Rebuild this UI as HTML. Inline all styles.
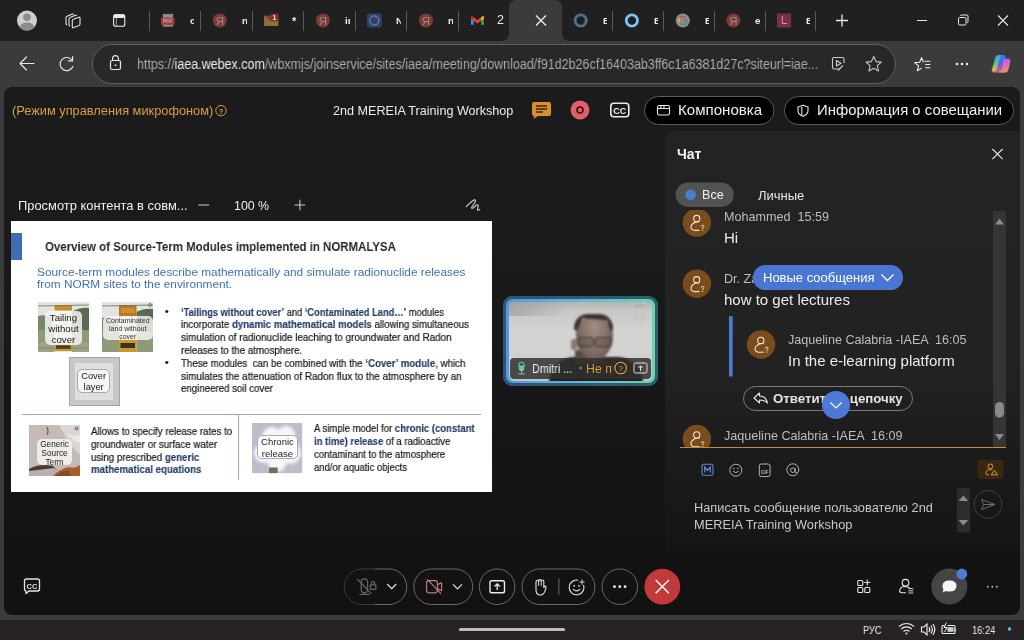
<!DOCTYPE html>
<html><head><meta charset="utf-8">
<style>
*{box-sizing:border-box;margin:0;padding:0}
html,body{width:1024px;height:640px;overflow:hidden;background:#3b3b3b;font-family:"Liberation Sans",sans-serif}
.a{position:absolute}
.t{position:absolute;white-space:pre;line-height:1;will-change:transform}
svg{position:absolute;overflow:visible;will-change:transform}
#tabbar{left:0;top:0;width:1024px;height:41px;background:#202020}
#addr{left:0;top:41px;width:1024px;height:46px;background:#3b3b3b}
#omni{left:92px;top:44px;width:804px;height:40px;border-radius:20px;background:#282828;border:1px solid #5e5e5e}
#webex{left:4px;top:87px;width:1016px;height:528px;border-radius:8px;background:linear-gradient(#1b1b1b 0px,#1b1b1b 120px,#121212 520px);overflow:hidden}
#taskbar{left:0;top:620px;width:1024px;height:20px;background:#282323}
.sep{position:absolute;top:11px;width:1px;height:20px;background:#5a5a5a}
.tabtxt{position:absolute;will-change:transform;top:16.2px;font-size:9.8px;color:#ececec;line-height:1}
</style></head><body>
<div id="tabbar" class="a"></div>
<div class="sep" style="left:148.5px"></div>
<div class="sep" style="left:200px"></div>
<div class="sep" style="left:251.5px"></div>
<div class="sep" style="left:303px"></div>
<div class="sep" style="left:354.5px"></div>
<div class="sep" style="left:406px"></div>
<div class="sep" style="left:457.5px"></div>
<div class="sep" style="left:612.4px"></div>
<div class="sep" style="left:663px"></div>
<div class="sep" style="left:714px"></div>
<div class="sep" style="left:764.8px"></div>
<div class="sep" style="left:814.9px"></div>
<div id="addr" class="a"></div>
<svg width="1024" height="41" style="left:0;top:0">
 <!-- active tab -->
 <path d="M501,41 Q509,41 509,33 L509,8 Q509,0 517,0 L554,0 Q562,0 562,8 L562,33 Q562,41 570,41 Z" fill="#3b3b3b"/>
 <path d="M536,15.5 L546,25.5 M546,15.5 L536,25.5" stroke="#f2f2f2" stroke-width="1.3"/>
 <!-- profile -->
 <circle cx="27" cy="20.5" r="10" fill="#cfcfcf"/>
 <circle cx="27" cy="17.3" r="3.8" fill="#8d8d8d"/>
 <path d="M19.6,27.2 Q21,22.6 27,22.6 Q33,22.6 34.4,27.2 Q31.5,30.5 27,30.5 Q22.5,30.5 19.6,27.2Z" fill="#8d8d8d"/>
 <!-- collections -->
 <g fill="none" stroke="#e8e8e8" stroke-width="1.05" stroke-linejoin="round">
  <path d="M67.2,25 Q66,24.6 66,23.5 L66,17.5 Q66,16.5 67,16.2 L72.5,14 Q73.5,13.7 73.8,14.6"/>
  <path d="M70,26.2 Q69,25.8 69,24.8 L69,18.8 Q69,17.8 70,17.5 L75.5,15.3 Q76.5,15 76.8,15.9"/>
  <path d="M73.3,19.3 L79,17.2 Q80,16.9 80,17.9 L80,24.3 Q80,25.2 79,25.6 L73.3,27.7 Q72.3,28 72.3,27 L72.3,20.6 Q72.3,19.6 73.3,19.3Z"/>
 </g>
 <!-- tab actions -->
 <rect x="113.6" y="14.7" width="11.2" height="11.6" rx="2" fill="none" stroke="#ececec" stroke-width="1.1"/>
 <rect x="113.6" y="14.2" width="11.2" height="3.8" rx="1.5" fill="#ececec"/>
 <path d="M116.3,18 L116.3,26" stroke="#9a9a9a" stroke-width="1"/>
 <!-- pdf -->
 <rect x="162.8" y="13.9" width="10.3" height="12.8" fill="#8a8a8a"/>
 <rect x="161" y="17.8" width="13.5" height="7" fill="#9b3b3b"/>
 <text x="167.7" y="23.2" font-size="5" fill="#cfa0a0" text-anchor="middle" font-family="Liberation Sans" font-weight="bold">PDF</text>
 <!-- yandex -->
 <g font-family="Liberation Sans" font-size="11.5" fill="#9a8e8c" text-anchor="middle">
  <circle cx="219.8" cy="20.5" r="7" fill="#7f3a31"/><text x="219.8" y="24.6">Я</text>
  <circle cx="323" cy="20.5" r="7" fill="#7f3a31"/><text x="323" y="24.6">Я</text>
  <circle cx="426" cy="20.5" r="7" fill="#7f3a31"/><text x="426" y="24.6">Я</text>
  <circle cx="733.3" cy="20.5" r="7" fill="#7f3a31"/><text x="733.3" y="24.6">Я</text>
 </g>
 <!-- mail -->
 <rect x="264" y="15.8" width="14.4" height="10.2" fill="#857536"/>
 <path d="M264,15.8 L270.6,15.8 L270.6,21.3 Z" fill="#8e3a34"/>
 <rect x="270.6" y="13.5" width="7.8" height="7.8" fill="#8a2c2a"/>
 <text x="274.5" y="20" font-size="7" fill="#e8e8e8" text-anchor="middle" font-family="Liberation Sans" font-weight="bold">1</text>
 <!-- UN -->
 <rect x="367" y="13.5" width="14.6" height="14" rx="2" fill="#2f4373"/>
 <circle cx="374.3" cy="20.5" r="4.6" fill="none" stroke="#8f98b0" stroke-width="0.9"/>
 <!-- gmail -->
 <path d="M471,17.2 Q471,15.6 472.6,16.4 L477.4,20 L482.2,16.4 Q483.8,15.6 483.8,17.2 L483.8,18.8 L477.4,23.4 L471,18.8 Z" fill="#e04434"/>
 <rect x="471" y="17.6" width="2.7" height="7.2" fill="#4a86ee"/>
 <rect x="481.1" y="17.6" width="2.7" height="7.2" fill="#34a853"/>
 <path d="M481.1,17.6 L483.8,15.8 L483.8,18.8 L481.1,20.6Z" fill="#f5bb10"/>
 <path d="M471,17.2 Q471,15.6 472.6,16.4 L473.7,17.2 L473.7,20 L471,18.8Z" fill="#c5221f"/>
 <!-- rings -->
 <circle cx="580.7" cy="20.5" r="5.6" fill="none" stroke="#4d7090" stroke-width="2.8"/>
 <circle cx="631.9" cy="20.5" r="5.6" fill="none" stroke="#7cc4f4" stroke-width="2.8"/>
 <!-- google -->
 <circle cx="682.8" cy="20.5" r="7" fill="#8e8e8e"/>
 <path d="M679.6,18.2 A3.9,3.9 0 0 1 685.6,17.6" fill="none" stroke="#d04a3a" stroke-width="1.6"/>
 <path d="M679.6,18.2 A3.9,3.9 0 0 0 679.8,23" fill="none" stroke="#d8b030" stroke-width="1.6"/>
 <path d="M679.8,23 A3.9,3.9 0 0 0 686,23" fill="none" stroke="#4a9a50" stroke-width="1.6"/>
 <path d="M686,23 A3.9,3.9 0 0 0 686.7,20.3 L682.9,20.3" fill="none" stroke="#4a7ad0" stroke-width="1.5"/>
 <!-- L -->
 <rect x="777" y="13.5" width="14" height="14" fill="#7a3040"/>
 <path d="M782.3,16 L782.3,23.5 L787,23.5" fill="none" stroke="#c8a0a8" stroke-width="1"/>
 <!-- plus -->
 <path d="M842,14.5 L842,26.5 M836,20.5 L848,20.5" stroke="#e8e8e8" stroke-width="1.3"/>
 <!-- window controls -->
 <path d="M917,20.5 L927,20.5" stroke="#e8e8e8" stroke-width="1"/>
 <g fill="none" stroke="#e8e8e8" stroke-width="1">
  <rect x="958.5" y="17.5" width="7.5" height="7.5" rx="1.2"/>
  <path d="M960.5,16 Q960.5,15 961.7,15 L967,15 Q968,15 968,16 L968,21.5 Q968,22.7 967,22.7"/>
 </g>
 <path d="M998,15.5 L1008,25.5 M1008,15.5 L998,25.5" stroke="#e8e8e8" stroke-width="1.1"/>
</svg>
<div class="a" style="left:189.8px;top:12px;width:4.5px;height:16px;overflow:hidden"><div class="tabtxt" style="left:0;top:4.0px;font-size:9.8px;font-weight:bold">c</div></div>
<div class="a" style="left:241.5px;top:12px;width:5px;height:16px;overflow:hidden"><div class="tabtxt" style="left:0;top:4.0px;font-size:9.8px;font-weight:bold">n</div></div>
<div class="a" style="left:292px;top:12px;width:5px;height:16px;overflow:hidden"><div class="tabtxt" style="left:0;top:3.5px;font-size:11px;font-weight:bold">*</div></div>
<div class="a" style="left:344.5px;top:12px;width:5px;height:16px;overflow:hidden"><div class="tabtxt" style="left:0;top:4.0px;font-size:9.8px;font-weight:bold">ir</div></div>
<div class="a" style="left:396px;top:12px;width:4.5px;height:16px;overflow:hidden"><div class="tabtxt" style="left:0;top:4.0px;font-size:9.8px;font-weight:bold">N</div></div>
<div class="a" style="left:448px;top:12px;width:4.8px;height:16px;overflow:hidden"><div class="tabtxt" style="left:0;top:4.0px;font-size:9.8px;font-weight:bold">n</div></div>
<div class="a" style="left:497px;top:12px;width:8px;height:16px;overflow:hidden"><div class="tabtxt" style="left:0;top:1.7px;font-size:12.5px;font-weight:normal">2</div></div>
<div class="a" style="left:602.5px;top:12px;width:4.2px;height:16px;overflow:hidden"><div class="tabtxt" style="left:0;top:4.0px;font-size:9.8px;font-weight:bold">B</div></div>
<div class="a" style="left:654px;top:12px;width:4px;height:16px;overflow:hidden"><div class="tabtxt" style="left:0;top:4.0px;font-size:9.8px;font-weight:bold">E</div></div>
<div class="a" style="left:704.7px;top:12px;width:4px;height:16px;overflow:hidden"><div class="tabtxt" style="left:0;top:4.0px;font-size:9.8px;font-weight:bold">E</div></div>
<div class="a" style="left:754.5px;top:12px;width:5px;height:16px;overflow:hidden"><div class="tabtxt" style="left:0;top:4.0px;font-size:9.8px;font-weight:bold">e</div></div>
<div class="a" style="left:806px;top:12px;width:4px;height:16px;overflow:hidden"><div class="tabtxt" style="left:0;top:4.0px;font-size:9.8px;font-weight:bold">E</div></div>
<div id="omni" class="a"></div>
<svg width="1024" height="46" style="left:0;top:41px">
 <g fill="none" stroke="#e6e6e6" stroke-width="1.2" stroke-linecap="round" stroke-linejoin="round">
  <path d="M20,22.5 L34,22.5 M26.5,16 L20,22.5 L26.5,29"/>
  <path d="M72.3,19.5 A6.6,6.6 0 1 0 72.9,25.5"/>
  <path d="M72.6,15.5 L72.6,19.8 L68.3,19.8"/>
  <rect x="110.5" y="19.5" width="10" height="9" rx="1.5"/>
  <path d="M112.6,19.5 L112.6,17.5 A2.9,2.9 0 0 1 118.4,17.5 L118.4,19.5"/>
 </g>
 <circle cx="115.5" cy="24.2" r="0.9" fill="#e6e6e6"/>
 <g fill="none" stroke="#c8c8c8" stroke-width="1.1" stroke-linejoin="round">
  <path d="M840,28 L834,28 Q832.5,28 832.5,26.5 L832.5,18 Q832.5,16.5 834,16.5 L842.5,16.5 Q844,16.5 844,18 L844,22"/>
  <path d="M836.5,19.5 L836.5,25 L841,22.2 Z"/>
  <path d="M838,29.5 L843,24.5" />
  <path d="M873.7,15.5 L876,20.6 L881.3,21.1 L877.3,24.6 L878.5,30 L873.7,27.2 L868.9,30 L870.1,24.6 L866.1,21.1 L871.4,20.6 Z"/>
  <path d="M921.6,27.1 L917.3,29.8 L918.6,24.9 L914.7,21.6 L919.7,21.3 L921.6,16.6 L923.5,21.3" stroke="#ececec"/>
  <path d="M924.5,20.2 L930.3,20.2 M925.2,23.5 L930.3,23.5 M925.2,26.8 L930.3,26.8" stroke="#ececec"/>
 </g>
 <circle cx="957" cy="23" r="1.3" fill="#ececec"/><circle cx="962" cy="23" r="1.3" fill="#ececec"/><circle cx="967" cy="23" r="1.3" fill="#ececec"/>
 <defs>
  <linearGradient id="cp1" x1="0" y1="0" x2="0" y2="1"><stop offset="0" stop-color="#2f7ef0"/><stop offset="0.5" stop-color="#5a60e0"/><stop offset="1" stop-color="#e06090"/></linearGradient>
  <linearGradient id="cp2" x1="0" y1="0" x2="0" y2="1"><stop offset="0" stop-color="#b060e8"/><stop offset="0.6" stop-color="#e870b0"/><stop offset="1" stop-color="#f09050"/></linearGradient><linearGradient id="cp3" x1="0" y1="0" x2="0" y2="1"><stop offset="0" stop-color="#40a0f0"/><stop offset="0.45" stop-color="#50c870"/><stop offset="1" stop-color="#f0c040"/></linearGradient>
 </defs>
 <path d="M997.5,14 L1003.5,14 Q1006,14 1005.3,16.5 L1001.5,28.5 Q1000.5,31.5 997.5,31.5 L994,31.5 Q991,31.5 991.8,28.5 L995,16.5 Q995.6,14 997.5,14Z" fill="url(#cp1)"/>
 <path d="M1004,17.5 L1007.5,17.5 Q1011,17.5 1010.3,21 L1008.5,28.5 Q1007.6,31.8 1004.5,31.8 L998,31.8 Q1000.8,31 1001.6,28.3Z" fill="url(#cp2)"/>
 <path d="M992.5,27.5 L995.5,17.5 Q996.3,14.5 999,14 L1001,14 L997,27 Q996,30.5 993,30.5 Q991.8,30 992.5,27.5Z" fill="url(#cp3)"/>
</svg>
<div class="t" style="left:137px;top:57px;font-size:14px;color:#a9a9a9;transform-origin:0 0;transform:scaleX(0.893)">https://<span style="color:#ececec">iaea.webex.com</span>/wbxmjs/joinservice/sites/iaea/meeting/download/f91d2b26cf16403ab3ff6c1a6381d27c?siteurl=iae...</div>
<div id="webex" class="a"></div>
<!-- webex header -->
<div class="t" style="left:11.5px;top:105px;font-size:12.8px;color:#dc9c42">(Режим управления микрофоном)</div>
<svg width="1024" height="44" style="left:0;top:87px">
 <circle cx="221" cy="23.6" r="5.2" fill="none" stroke="#dc9c42" stroke-width="1"/>
 <text x="221" y="26.6" font-size="7.5" fill="#dc9c42" text-anchor="middle" font-family="Liberation Sans" font-weight="bold">?</text>
 <!-- chat icon -->
 <path d="M534,15 L549,15 Q551,15 551,17 L551,27 Q551,29 549,29 L538,29 L533.5,32 L534,29 Q532,29 532,27 L532,17 Q532,15 534,15Z" fill="#d8902e"/>
 <path d="M536,19 L547,19 M536,22 L547,22 M536,25 L543,25" stroke="#3a2508" stroke-width="1.3"/>
 <!-- record -->
 <circle cx="580" cy="23" r="9.4" fill="#e0606a"/>
 <circle cx="580" cy="23" r="3" fill="none" stroke="#3a1010" stroke-width="1.6"/>
 <!-- cc -->
 <rect x="610.8" y="16.3" width="18" height="13.5" rx="3" fill="none" stroke="#ececec" stroke-width="1.6"/>
 <text x="619.8" y="26.8" font-size="9" fill="#ececec" text-anchor="middle" font-family="Liberation Sans" font-weight="bold">CC</text>
 <!-- pills -->
 <rect x="644.5" y="9.5" width="129.5" height="28" rx="14" fill="#000" stroke="#5c5c5c" stroke-width="1"/>
 <rect x="784.5" y="9.5" width="229" height="28" rx="14" fill="#000" stroke="#5c5c5c" stroke-width="1"/>
 <g fill="none" stroke="#e8e8e8" stroke-width="1.1">
  <rect x="657.5" y="18.5" width="12" height="9.5" rx="1.8"/>
  <path d="M657.5,21.5 L669.5,21.5 M660.8,18.5 L660.8,21.5 M664,18.5 L664,21.5"/>
  <path d="M803,18.3 Q806,19.5 808,20 L808,23.5 Q808,27.5 803,29.3 Q798,27.5 798,23.5 L798,20 Q800,19.5 803,18.3 Z"/><path d="M801.8,20 L801.8,28.2"/>
 </g>
 
</svg>
<div class="t" style="left:333px;top:104.8px;font-size:12.6px;color:#ececec">2nd MEREIA Training Workshop</div>
<div class="t" style="left:677.5px;top:103px;font-size:14.2px;color:#f0f0f0;transform-origin:0 0;transform:scaleX(1.063)">Компоновка</div>
<div class="t" style="left:817px;top:103px;font-size:14.2px;color:#f0f0f0;transform-origin:0 0;transform:scaleX(1.05)">Информация о совещании</div>
<!-- content toolbar -->
<div class="t" style="left:18px;top:200.4px;font-size:12.9px;color:#f0f0f0">Просмотр контента в совм...</div>
<svg width="500" height="30" style="left:0;top:190px">
 <path d="M198.3,15 L209.2,15" stroke="#cfcfcf" stroke-width="1"/>
 <path d="M294.6,15 L305.2,15 M299.9,9.7 L299.9,20.3" stroke="#cfcfcf" stroke-width="1"/>
 <path d="M466.3,16.6 Q471,11.5 474,9.9 Q476.3,9.3 475,12.3 L471.9,17 Q470.9,19 473.2,18 L476.2,15.2 Q478.6,14 478,16.8 L477.4,19.6 Q477.6,21 479.7,19.4" fill="none" stroke="#d4d4d4" stroke-width="1.1" stroke-linecap="round" stroke-linejoin="round"/>
</svg>
<div class="t" style="left:234px;top:200.4px;font-size:12.4px;color:#f0f0f0">100 %</div>
<!-- slide -->
<div class="a" style="left:11px;top:221px;width:481px;height:271px;background:#fff"></div>
<div class="a" style="left:11px;top:232.5px;width:11.2px;height:27.2px;background:#3f6cb5"></div>
<div class="t" style="left:44.7px;top:239.6px;font-size:13.5px;font-weight:bold;color:#262626;transform-origin:0 0;transform:scaleX(0.849)">Overview of Source-Term Modules implemented in NORMALYSA</div>
<div class="t" style="left:37px;top:266.2px;font-size:11.5px;color:#4070b8;line-height:12px;transform-origin:0 0;transform:scaleX(1.028)">Source-term modules describe mathematically and simulate radionuclide releases
from NORM sites to the environment.</div>
<div class="a" style="left:22px;top:413.5px;width:459px;height:1px;background:#8eaadb"></div>
<div class="a" style="left:238px;top:414px;width:1px;height:65.5px;background:#8eaadb"></div>
<style>
.bl{position:absolute;will-change:transform;white-space:pre;font-size:10.4px;line-height:10.4px;color:#151515;transform-origin:0 0;-webkit-text-stroke:0.2px #151515}
.bl b{-webkit-text-stroke:0.1px #1f3864}
.bl b{color:#1f3864}
.lbl{position:absolute;will-change:transform;background:rgba(245,245,242,0.88);border-radius:5px;text-align:center;color:#222;white-space:pre}
</style>
<div class="bl" style="left:165px;top:306.5px">•</div>
<div class="bl" style="left:165px;top:357.7px">•</div>
<div class="bl" style="left:180.6px;top:307.6px;transform:scaleX(0.896)"><b>‘Tailings without cover’</b> and <b>‘Contaminated Land…’</b> modules</div>
<div class="bl" style="left:180.6px;top:320.4px;transform:scaleX(0.928)">incorporate <b>dynamic mathematical models</b> allowing simultaneous</div>
<div class="bl" style="left:180.6px;top:333.2px;transform:scaleX(0.950)">simulation of radionuclide leaching to groundwater and Radon</div>
<div class="bl" style="left:180.6px;top:346.0px;transform:scaleX(0.940)">releases to the atmosphere.</div>
<div class="bl" style="left:180.6px;top:358.8px;transform:scaleX(0.933)">These modules  can be combined with the <b>‘Cover’ module</b>, which</div>
<div class="bl" style="left:180.6px;top:371.6px;transform:scaleX(0.953)">simulates the attenuation of Radon flux to the atmosphere by an</div>
<div class="bl" style="left:180.6px;top:384.4px;transform:scaleX(0.931)">engineered soil cover</div>
<div class="bl" style="left:90.8px;top:425.8px;line-height:12.8px;transform:scaleX(0.933)">Allows to specify release rates to
groundwater or surface water
using prescribed <b>generic</b>
<b>mathematical equations</b></div>
<div class="bl" style="left:314.1px;top:422.8px;line-height:12.9px;transform:scaleX(0.915)">A simple model for <b>chronic (constant</b>
<b>in time) release</b> of a radioactive
contaminant to the atmosphere
and/or aquatic objects</div>
<!-- images -->
<svg width="51" height="50" style="left:38.4px;top:302.2px">
 <defs><filter id="bl1"><feGaussianBlur stdDeviation="0.6"/></filter></defs>
 <g filter="url(#bl1)">
 <rect width="51" height="50" fill="#e2e4e0"/>
 <path d="M0,14 Q8,12 14,16 L14,50 L0,50Z" fill="#7a8670"/>
 <path d="M34,10 Q42,5 51,6 L51,50 L34,50Z" fill="#5c6a52"/>
 <rect x="0" y="28" width="51" height="22" fill="#8e9c76"/>
 <rect x="0" y="40" width="51" height="10" fill="#9aa484"/>
 <rect x="16.5" y="3" width="17.5" height="47" fill="#e8e2cc"/>
 <rect x="16.5" y="3" width="17.5" height="5.5" fill="#c88e28"/>
 <rect x="16.5" y="42" width="17.5" height="7" fill="#c8982e"/>
 <rect x="18" y="43.5" width="14.5" height="3.5" fill="#3a3020"/>
 <path d="M0,4 L51,3" stroke="#6a6a6a" stroke-width="0.8"/>
 <path d="M0,46 L51,46" stroke="#7a7a6a" stroke-width="0.7"/>
 </g>
</svg>
<svg width="51" height="50" style="left:102.1px;top:302.2px">
 <g filter="url(#bl1)">
 <rect width="51" height="50" fill="#e2e4e0"/>
 <path d="M0,16 Q8,14 16,18 L16,50 L0,50Z" fill="#7a8670"/>
 <path d="M34,10 Q42,6 51,7 L51,50 L34,50Z" fill="#5c6a52"/>
 <rect x="0" y="30" width="51" height="20" fill="#8e9c76"/>
 <rect x="17" y="3" width="17.5" height="47" fill="#e8e2cc"/>
 <rect x="17" y="3" width="17.5" height="11" fill="#b8782a"/>
 <rect x="19" y="6" width="13.5" height="5" fill="#d09030"/>
 <rect x="17" y="38" width="17.5" height="12" fill="#c8982e"/>
 <rect x="18.5" y="41" width="14.5" height="5" fill="#3a3020"/>
 <path d="M0,4 L51,3" stroke="#6a6a6a" stroke-width="0.8"/>
 <circle cx="48" cy="3" r="1.5" fill="none" stroke="#555" stroke-width="0.7"/>
 </g>
</svg>
<div class="lbl" style="left:45.1px;top:310.6px;width:36.9px;height:34.4px;font-size:9.6px;line-height:11px;padding-top:1px;color:#151515;background:rgba(246,246,243,0.84)">Tailing
without
cover</div>
<div class="lbl" style="left:103px;top:316px;width:49.5px;height:24.2px;font-size:7px;line-height:8.3px;padding-top:0.5px;color:#333;background:rgba(246,246,243,0.82)">Contaminated
land without
cover</div>
<div class="a" style="left:68.8px;top:357px;width:50.8px;height:49.4px;background:#c8c8c8;border:1px solid #a4a4a4"></div>
<div class="a" style="left:74.9px;top:362.8px;width:37.9px;height:37.4px;background:#dfdfdf"></div>
<div class="lbl" style="left:77.2px;top:369.4px;width:33.3px;height:24px;background:#f6f6f6;border:1px solid #a8a8a8;font-size:9.3px;line-height:11px;padding-top:0.5px;border-radius:5px;color:#1a1a1a">Cover
layer</div>
<svg width="51" height="51" style="left:29px;top:425.3px">
 <g filter="url(#bl1)">
 <rect width="51" height="51" fill="#c4bab6"/>
 <path d="M30,0 L51,0 L51,30 Q40,20 30,0Z" fill="#dcd6d2"/>
 <path d="M38,8 Q46,12 51,10 L51,18 Q44,16 38,8Z" fill="#ece8e4"/>
 <path d="M18,2 Q20,6 18,10" stroke="#a05040" stroke-width="1.2" fill="none"/>
 <path d="M0,44 Q10,38 24,41 L28,45 Q14,43 0,51Z" fill="#4a3e34"/>
 <path d="M0,46 L26,43 L30,51 L0,51Z" fill="#b8b0ac"/>
 <path d="M24,51 Q30,44 40,42 Q46,44 51,40 L51,51Z" fill="#a8602c"/>
 <path d="M26,51 Q32,46 40,45 L42,51Z" fill="#8a4a20"/>
 <circle cx="47.5" cy="3.5" r="1.4" fill="none" stroke="#333" stroke-width="0.8"/>
 </g>
</svg>
<div class="lbl" style="left:37.1px;top:438.5px;width:35.2px;height:25.5px;font-size:8.2px;line-height:9.1px;padding-top:0.5px;color:#222;background:rgba(246,244,242,0.86)">Generic
Source
Term</div>
<svg width="51" height="51" style="left:251.8px;top:422.6px">
 <defs><filter id="bl2"><feGaussianBlur stdDeviation="1.5"/></filter></defs>
 <rect width="50.2" height="50.1" fill="#bcbccb"/>
 <g filter="url(#bl2)" fill="#f6f6f8">
  <circle cx="20" cy="14" r="10"/><circle cx="34" cy="12" r="9"/><circle cx="12" cy="30" r="10"/><circle cx="38" cy="30" r="11"/><circle cx="25" cy="40" r="9"/><circle cx="27" cy="25" r="10"/>
 </g>
 <rect x="17" y="44.5" width="8.7" height="5.6" fill="#7a6a58"/>
</svg>
<div class="lbl" style="left:256.5px;top:435.4px;width:40.9px;height:23.7px;background:rgba(255,255,255,0.92);border:1px solid #aaa;font-size:9.5px;line-height:11.5px;padding-top:0px">Chronic
release</div>
<!-- video thumb -->
<div class="a" style="left:503px;top:296px;width:154.5px;height:89.6px;border-radius:9px;background:linear-gradient(90deg,#2f5578,#2e6068)"></div>
<div class="a" style="left:506px;top:299px;width:148.5px;height:83.6px;border-radius:6.5px;background:linear-gradient(90deg,#5598e0,#62b8d8 50%,#70d0b8)"></div>
<div class="a" style="left:508.5px;top:301.5px;width:143.5px;height:79px;border-radius:5px;overflow:hidden;background:linear-gradient(180deg,#b4b4b2 0,#c8c8c6 10px,#d4d4d2 30px,#d0d0ce 60px,#c4c4c2 79px)">
 <div class="a" style="left:0;top:0;width:60px;height:14px;background:linear-gradient(90deg,rgba(150,150,148,0.6),rgba(190,190,188,0))"></div>
 <div class="a" style="left:0;top:0;width:143.5px;height:79px;filter:blur(1px)">
  <div class="a" style="left:124px;top:0;width:12px;height:19px;background:#c6c6c6"></div>
  <div class="a" style="left:125px;top:2px;width:10px;height:3px;background:#a8a8a8"></div>
  <div class="a" style="left:40px;top:55px;width:94px;height:30px;border-radius:26px 26px 0 0;background:#24201e"></div>
  <div class="a" style="left:66px;top:48px;width:30px;height:14px;background:#5a4a42"></div>
  <div class="a" style="left:67px;top:15px;width:37px;height:43px;border-radius:16px 16px 18px 18px / 16px 16px 24px 24px;background:radial-gradient(ellipse at 50% 25%,#a08c84 0,#86746a 45%,#64544c 85%)"></div>
  <div class="a" style="left:62px;top:37px;width:6px;height:11px;border-radius:3px;background:#8a7870"></div>
  <div class="a" style="left:65.5px;top:12px;width:39px;height:17px;border-radius:17px 17px 3px 4px;background:#3a322e;clip-path:polygon(0 0,100% 0,100% 100%,93% 100%,86% 40%,22% 28%,7% 100%,0 100%)"></div>
  <div class="a" style="left:69px;top:35px;width:16px;height:10px;border-radius:2.5px;border:1.3px solid #3a322e;background:rgba(70,60,55,0.25)"></div>
  <div class="a" style="left:86px;top:35px;width:17px;height:10px;border-radius:2.5px;border:1.3px solid #3a322e;background:rgba(70,60,55,0.25)"></div>
 </div>
 <div class="a" style="left:1.7px;top:56px;width:141px;height:21.5px;border-radius:4px;background:rgba(48,48,48,0.84)"></div>
</div>
<svg width="160" height="30" style="left:500px;top:355px">
 <path d="M18.8,11 L18.8,10 A2.7,2.7 0 0 1 24.2,10 L24.2,11 Z" fill="none" stroke="#6cc89a" stroke-width="1.1"/>
 <path d="M18.8,11 L24.2,11 L24.2,13.5 A2.7,2.7 0 0 1 18.8,13.5 Z" fill="#6cc89a"/>
 <path d="M21.5,16.3 L21.5,18.8 M18,19 L25,19" fill="none" stroke="#6cc89a" stroke-width="1.1"/>
 <circle cx="80.6" cy="13" r="1.4" fill="#777"/>
 <circle cx="120.7" cy="13" r="5.8" fill="none" stroke="#e8a030" stroke-width="1.1"/>
 <text x="120.7" y="16.2" font-size="8" fill="#e8a030" text-anchor="middle" font-family="Liberation Sans">?</text>
 <rect x="134" y="8" width="13" height="10" rx="1.5" fill="none" stroke="#e0e0e0" stroke-width="1"/>
 <path d="M140.5,16 L140.5,11 M138.3,13 L140.5,10.8 L142.7,13" fill="none" stroke="#e0e0e0" stroke-width="1"/>
</svg>
<div class="t" style="left:531.8px;top:363px;font-size:12px;color:#e8e8e8;transform-origin:0 0;transform:scaleX(0.9)">Dmitri ...</div>
<div class="a" style="left:586px;top:360px;width:26px;height:17px;overflow:hidden"><div class="t" style="left:0;top:3.3px;font-size:12.3px;color:#dc9a30">Не п</div></div>
<!-- chat panel -->
<div class="a" style="left:665px;top:130.5px;width:355px;height:420px;border-radius:8px 0 0 0;background:linear-gradient(#232323 0,#222 240px,#1b1b1b 330px,#151515 420px)"></div>
<div class="t" style="left:676.5px;top:147px;font-size:14px;font-weight:bold;color:#f4f4f4">Чат</div>
<svg width="360" height="430" style="left:660px;top:130px">
 <path d="M332.4,19 L342.6,29.2 M342.6,19 L332.4,29.2" stroke="#e0e0e0" stroke-width="1.2"/>
 <rect x="15.6" y="52.5" width="58.2" height="24.4" rx="12.2" fill="#525252"/>
 <circle cx="30.6" cy="64.7" r="5.3" fill="#4d7ad6"/>
</svg>
<div class="t" style="left:702.4px;top:188.5px;font-size:12.6px;color:#f0f0f0">Все</div>
<div class="t" style="left:757.7px;top:188.5px;font-size:13px;color:#e8e8e8">Личные</div>
<!-- messages clip -->
<div class="a" style="left:665px;top:210px;width:325px;height:237px;overflow:hidden">
 <svg width="330" height="240" style="left:0;top:0">
  <defs>
   <g id="avt">
    <circle cx="0" cy="0" r="14.2" fill="#7a4c1c"/>
    <g fill="none" stroke="#f0e4d4" stroke-width="1.1">
     <circle cx="-0.2" cy="-4.1" r="3.1"/>
     <path d="M2.6,-0.9 Q-2,-1.6 -5,1.8 Q-7.6,6 -3.5,7.6 Q-1,8 2.6,7.6"/>
    </g>
    <path d="M4.3,3.9 Q4.6,2.6 5.7,2.6 Q7,2.7 7,3.9 Q7,4.8 5.8,5.4 L5.8,6.3" fill="none" stroke="#f0e4d4" stroke-width="1"/>
    <circle cx="5.8" cy="7.6" r="0.6" fill="#f0e4d4"/>
   </g>
  </defs>
  <use href="#avt" x="31.9" y="12.6"/>
  <use href="#avt" x="31.9" y="73.8"/>
  <use href="#avt" x="96" y="134.5"/>
  <use href="#avt" x="31.9" y="229"/>
  <rect x="64" y="106.2" width="3.7" height="60.3" fill="#4d7ad6"/>
 </svg>
 <div class="t" style="left:58.6px;top:0.7px;font-size:12.6px;color:#bdbdbd">Mohammed  15:59</div>
 <div class="t" style="left:58.6px;top:20px;font-size:15px;color:#ececec">Hi</div>
 <div class="t" style="left:58.9px;top:63.3px;font-size:12.6px;color:#bdbdbd">Dr. Za</div>
 <div class="t" style="left:59px;top:82px;font-size:15px;color:#ececec">how to get lectures</div>
 <div class="t" style="left:123px;top:123.8px;font-size:12.6px;color:#bdbdbd">Jaqueline Calabria -IAEA  16:05</div>
 <div class="t" style="left:123px;top:142.5px;font-size:15px;color:#ececec">In the e-learning platform</div>
 <div class="a" style="left:78.2px;top:175.6px;width:169.4px;height:25px;border-radius:12.5px;border:1px solid #7a7a7a"></div>
 <svg width="30" height="30" style="left:84px;top:178px"><path d="M5,10 L10.5,5 L10.5,8 Q17,8 18.5,15 Q15.5,12 10.5,12 L10.5,15 Z" fill="none" stroke="#e8e8e8" stroke-width="1.1" stroke-linejoin="round"/></svg>
 <div class="t" style="left:108px;top:182px;font-size:13.25px;font-weight:bold;color:#e2e2e2">Ответить в цепочку</div>
 <div class="t" style="left:58.9px;top:220px;font-size:12.6px;color:#bdbdbd">Jaqueline Calabria -IAEA  16:09</div>
</div>
<!-- new messages pill -->
<div class="a" style="left:753.2px;top:265.4px;width:150px;height:24.6px;border-radius:12.3px;background:#4876d2"></div>
<div class="t" style="left:762.6px;top:271px;font-size:13px;color:#fff">Новые сообщения</div>
<svg width="20" height="20" style="left:878px;top:268px"><path d="M3.5,6.5 L9.5,12.5 L15.5,6.5" fill="none" stroke="#fff" stroke-width="1.3"/></svg>
<!-- scroll down circle -->
<svg width="40" height="40" style="left:816px;top:385px">
 <circle cx="20" cy="20" r="14" fill="#4d7ad6"/>
 <path d="M14.5,17.5 L20,23 L25.5,17.5" fill="none" stroke="#fff" stroke-width="1.2"/>
</svg>
<!-- scrollbar -->
<div class="a" style="left:993px;top:211px;width:13px;height:236px;background:#353535"></div>
<svg width="20" height="240" style="left:990px;top:208px">
 <path d="M5,16.5 L9.5,10.5 L14,16.5 Z" fill="#8a8a8a"/>
 <path d="M5,226 L9.5,232 L14,226 Z" fill="#8a8a8a"/>
 <rect x="5" y="194" width="9" height="15.6" rx="4.5" fill="#8a8a8a"/>
</svg>
<div class="a" style="left:679.5px;top:447px;width:326.5px;height:1.2px;background:#c88a30"></div>
<!-- composer toolbar -->
<svg width="360" height="110" style="left:660px;top:450px">
 <rect x="42" y="14.2" width="11" height="11" rx="1.8" fill="none" stroke="#5a8ad8" stroke-width="1.1"/>
 <path d="M44.8,22.5 L44.8,17 L47.5,20.3 L50.2,17 L50.2,22.5" fill="none" stroke="#6a9ae8" stroke-width="1.1"/>
 <g fill="none" stroke="#b4b4b4" stroke-width="1">
  <circle cx="75.8" cy="20.2" r="6"/>
  <path d="M73,21.2 Q75.8,24.2 78.6,21.2"/>
  <rect x="99.3" y="14" width="10.8" height="12.6" rx="2"/>
  <path d="M137.5,23.5 A6,6 0 1 1 138.8,20"/>
  <circle cx="132.8" cy="20.2" r="2.3"/>
  <path d="M135.1,18 L135.1,21.5 Q135.3,23.3 137,22.8 Q138.8,22.2 138.8,20"/>
 </g>
 <circle cx="73.8" cy="18.5" r="0.75" fill="#b4b4b4"/><circle cx="77.8" cy="18.5" r="0.75" fill="#b4b4b4"/>
 <text x="104.7" y="24" font-size="4.5" fill="#b4b4b4" text-anchor="middle" font-family="Liberation Sans" font-weight="bold">GIF</text>
 <rect x="317.5" y="9.7" width="26.2" height="19.2" rx="3" fill="#392710"/>
 <g fill="none" stroke="#d8962e" stroke-width="1">
  <circle cx="330.4" cy="16.4" r="2.4"/>
  <path d="M332.6,20.2 Q331.6,19.6 330.2,19.6 Q325.9,19.8 325.9,23.4 Q325.9,24.8 327.2,24.8 L329.2,24.8"/>
  <path d="M334.4,20.3 L337.6,24.8 L331.2,24.8 Z"/>
 </g>
 <rect x="296.8" y="38" width="13.2" height="44.5" fill="#2c2c2c"/>
 <path d="M298.5,51 L303.4,45.5 L308.3,51 Z" fill="#8a8a8a"/>
 <path d="M298.5,70 L303.4,75.5 L308.3,70 Z" fill="#8a8a8a"/>
 <circle cx="328" cy="54.4" r="14" fill="none" stroke="#404040" stroke-width="1"/>
 <path d="M321.5,49.5 L335,54.5 L321.5,59.5 L323.5,54.5 Z M323.5,54.5 L335,54.5" fill="none" stroke="#6a6a6a" stroke-width="1"/>
</svg>
<div class="t" style="left:693.6px;top:499.3px;font-size:12.8px;line-height:17px;color:#c8c8c8">Написать сообщение пользователю 2nd
MEREIA Training Workshop</div>
<!-- bottom controls -->
<svg width="1024" height="60" style="left:0;top:556px">
 <!-- cc -->
 <g fill="none" stroke="#e6e6e6" stroke-width="1.3" stroke-linejoin="round">
  <path d="M26.5,23 L37.5,23 Q39.5,23 39.5,25 L39.5,33 Q39.5,35 37.5,35 L29,35 L26,37.5 L26,35 Q24.5,35 24.5,33 L24.5,25 Q24.5,23 26.5,23Z"/>
 </g>
 <text x="32" y="32.5" font-size="7.5" fill="#e6e6e6" text-anchor="middle" font-family="Liberation Sans" font-weight="bold">CC</text>
 <!-- mute pill -->
 <path d="M375,13 L362,13 A17.75,17.75 0 0 0 362,48.5 L375,48.5" fill="none" stroke="#3c3c3c" stroke-width="1"/>
 <path d="M375,13 L389,13 A17.75,17.75 0 0 1 389,48.5 L375,48.5" fill="none" stroke="#6a6a6a" stroke-width="1"/>
 <g fill="none" stroke="#666" stroke-width="1.2">
  <path d="M361.2,33.5 L361.2,26 A3.2,3.2 0 0 1 367.6,26 L367.6,33.5 A3.2,3.2 0 0 1 361.2,33.5Z"/>
  <path d="M364.4,36.5 L364.4,38 M359.3,38.3 L369.5,38.3"/>
  <path d="M357.2,23 L371.3,37.6"/>
  <rect x="370.3" y="28.8" width="5.6" height="4.6" rx="0.6"/>
  <path d="M371.5,28.8 L371.5,27.2 A1.6,1.6 0 0 1 374.7,27.2 L374.7,28.8"/>
 </g>
 <path d="M387.2,28 L391.7,32.6 L396.2,28" fill="none" stroke="#e0e0e0" stroke-width="1.2"/>
 <!-- video pill -->
 <rect x="413.8" y="13" width="58.9" height="35.5" rx="17.75" fill="none" stroke="#6a6a6a" stroke-width="1"/>
 <g fill="none" stroke="#c47a80" stroke-width="1.15" stroke-linejoin="round">
  <rect x="426.6" y="24.6" width="10.8" height="12.2" rx="2.2"/>
  <path d="M437.4,28.6 L441.6,26.8 L441.6,34.6 L437.4,32.8"/>
  <path d="M427.2,23.4 L441.2,37.8"/>
 </g>
 <path d="M453,28.3 L457.5,32.8 L462,28.3" fill="none" stroke="#e0e0e0" stroke-width="1.2"/>
 <!-- share -->
 <circle cx="497.1" cy="30.7" r="17.75" fill="none" stroke="#6a6a6a" stroke-width="1"/>
 <rect x="490" y="24.8" width="14.5" height="12" rx="1.8" fill="none" stroke="#ececec" stroke-width="1.4"/>
 <path d="M497.2,34 L497.2,28 M494.5,30.5 L497.2,27.8 L499.9,30.5" fill="none" stroke="#ececec" stroke-width="1.3"/>
 <!-- reactions pill -->
 <rect x="522" y="13" width="72.9" height="35.5" rx="17.75" fill="none" stroke="#6a6a6a" stroke-width="1"/>
 <path d="M558.9,22.5 L558.9,39" stroke="#6a6a6a" stroke-width="1"/>
 <g fill="none" stroke="#e6e6e6" stroke-width="1.1" stroke-linejoin="round">
  <path d="M536,34 L536,26 Q536,24.2 537.3,24.2 Q538.6,24.2 538.6,26 L538.6,25 Q538.6,23.6 539.9,23.6 Q541.2,23.6 541.2,25 L541.2,25.4 Q541.2,24 542.5,24 Q543.8,24 543.8,25.4 L543.8,31.5 Q545,29.5 545.8,30.3 Q546.4,31.2 545.4,33.8 Q544,38.8 540.6,39 Q536,39 536,34 Z"/>
  <path d="M538.6,26 L538.6,30 M541.2,25.4 L541.2,30" stroke-width="0.9"/>
  <path d="M583.55,28.87 A7.4,7.4 0 1 1 577.88,24.11"/>
  <path d="M573.2,33.2 Q576.6,36.6 580,33.2"/>
  <path d="M582,23.4 L582,28.6 M579.4,26 L584.6,26" stroke-width="0.9"/>
 </g>
 <circle cx="574.2" cy="29.8" r="0.9" fill="#e6e6e6"/><circle cx="579" cy="29.8" r="0.9" fill="#e6e6e6"/>
 <!-- more -->
 <circle cx="619.8" cy="30.7" r="17.75" fill="none" stroke="#6a6a6a" stroke-width="1"/>
 <circle cx="614.5" cy="30.7" r="1.4" fill="#ececec"/><circle cx="619.8" cy="30.7" r="1.4" fill="#ececec"/><circle cx="625.1" cy="30.7" r="1.4" fill="#ececec"/>
 <!-- end -->
 <circle cx="662.3" cy="30.7" r="17.9" fill="#c2393c"/>
 <path d="M655.7,24.1 L668.9,37.3 M668.9,24.1 L655.7,37.3" stroke="#fff" stroke-width="1.4"/>
 <!-- right icons -->
 <g fill="none" stroke="#e6e6e6" stroke-width="1.1">
  <rect x="857.8" y="24.5" width="5" height="5" rx="1"/>
  <rect x="857.8" y="31.5" width="5" height="5" rx="1"/>
  <rect x="864.8" y="31.5" width="5" height="5" rx="1"/>
  <path d="M867.3,23.5 L867.3,29.5 M864.3,26.5 L870.3,26.5"/>
  <circle cx="905.5" cy="26.7" r="3.3"/>
  <path d="M910,32.5 Q908.5,30.5 905,30.5 Q899.7,30.7 899.7,35 Q899.7,36.7 902,36.7 L906,36.7"/>
 </g>
 <path d="M908.3,32.6 L913.3,32.6 M908.3,34.8 L913.3,34.8 M908.3,37 L913.3,37" stroke="#e6e6e6" stroke-width="0.9" fill="none"/>
 <circle cx="949.3" cy="30.5" r="18" fill="#454545"/>
 <path d="M949.5,24.5 Q956.5,24.5 956.5,30 Q956.5,35.5 949.5,35.5 Q947.5,35.5 946,35 L942.5,36.5 L943.5,33.5 Q942.5,32 942.5,30 Q942.5,24.5 949.5,24.5Z" fill="#f4f4f4"/>
 <circle cx="961.8" cy="18" r="5.4" fill="#4d7ad6"/>
 <circle cx="987.8" cy="30.7" r="0.85" fill="#d0d0d0"/><circle cx="992.3" cy="30.7" r="0.85" fill="#d0d0d0"/><circle cx="996.8" cy="30.7" r="0.85" fill="#d0d0d0"/>
</svg>
<div id="taskbar" class="a"></div>
<div class="a" style="left:459px;top:627.5px;width:106px;height:3px;border-radius:1.5px;background:#bdbdbd"></div>
<div class="t" style="left:863.4px;top:625.5px;font-size:10px;color:#f0f0f0;transform-origin:0 0;transform:scaleX(0.92)">РУС</div>
<div class="t" style="left:971.7px;top:625.5px;font-size:10px;color:#f0f0f0;transform-origin:0 0;transform:scaleX(0.93)">16:24</div>
<svg width="1024" height="20" style="left:0;top:620px">
 <g fill="none" stroke="#f0f0f0" stroke-width="1.1">
  <path d="M899,6.5 A11,11 0 0 1 914,6.5"/>
  <path d="M901.3,9 A7.5,7.5 0 0 1 911.7,9"/>
  <path d="M903.6,11.5 A4,4 0 0 1 909.4,11.5"/>
  <path d="M921.5,7 L924,7 L927,4 L927,15 L924,12 L921.5,12 Z"/>
  <path d="M929,7 Q930.5,9.5 929,12 M931,5.5 Q933.5,9.5 931,13.5 M933,4 Q936.5,9.5 933,15"/>
  <path d="M944.5,5.5 L942.8,5.5 Q942,5.5 942,6.5 L942,12.5 Q942,13.5 943,13.5 L954,13.5 Q955,13.5 955,12.5 L955,6.5 Q955,5.5 954,5.5 L947.5,5.5"/>
  <path d="M955,8.5 L955,11.5"/>
 </g>
 <circle cx="906.5" cy="13.5" r="1" fill="#f0f0f0"/>
 <path d="M946.5,2.5 L944,7.5 L947,7.5 L944.5,12" fill="none" stroke="#f0f0f0" stroke-width="1"/>
 <rect x="947.5" y="7.2" width="6" height="4.6" fill="#f0f0f0" opacity="0.85"/>
 <circle cx="1009.5" cy="9" r="1.7" fill="#4fc3f7"/>
</svg>
</body></html>
